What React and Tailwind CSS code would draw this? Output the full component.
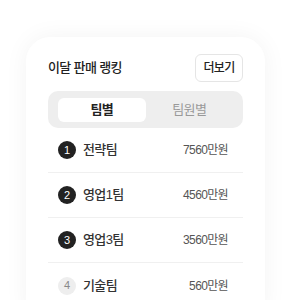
import React from 'react';

const rows = [
    { rank: 1, name: '전략팀', amount: '7560만원' },
    { rank: 2, name: '영업1팀', amount: '4560만원' },
    { rank: 3, name: '영업3팀', amount: '3560만원' },
    { rank: 4, name: '기술팀', amount: '560만원' },
];

const App = () => {
    return (
        <div className="w-[300px] h-[300px] overflow-hidden bg-white font-['Liberation_Sans','Noto_Sans_CJK_KR',sans-serif] tracking-[-0.04em]">
            <div className="ml-[26px] mt-[37px] w-[239px] rounded-[24px] bg-white shadow-[0_0_24px_rgba(0,0,0,0.05)] px-[22px] pt-[17px] pb-4">
                {/* Header */}
                <div className="flex items-center justify-between">
                    <h2 className="text-[13px] font-medium text-[#222]">이달 판매 랭킹</h2>
                    <button className="h-[28px] w-[48px] rounded-md border border-[#e5e5e5] bg-white text-[12px] font-medium text-[#222]">
                        더보기
                    </button>
                </div>

                {/* Tabs */}
                <div className="mt-[9px] flex h-[37px] items-center rounded-[10px] bg-[#eeeeee] px-[10px]">
                    <div className="flex h-[24px] flex-1 items-center justify-center rounded-md bg-white text-[13px] font-bold text-[#222]">
                        팀별
                    </div>
                    <div className="flex h-[24px] flex-1 items-center justify-center text-[13px] text-[#999]">
                        팀원별
                    </div>
                </div>

                {/* Ranking list */}
                <ul>
                    {rows.map((row, idx) => (
                        <li
                            key={row.rank}
                            className={`flex h-[45px] items-center pl-[10px] pr-[15px] ${idx < rows.length - 1 ? 'border-b border-[#f0f0f0]' : ''}`}
                        >
                            <span
                                className={`flex h-[18px] w-[18px] items-center justify-center rounded-full text-[11px] tracking-normal ${row.rank <= 3 ? 'bg-[#222] text-white' : 'bg-[#eeeeee] text-[#888]'}`}
                            >
                                {row.rank}
                            </span>
                            <span className="ml-[7px] text-[13px] font-medium text-[#333]">{row.name}</span>
                            <span className="ml-auto text-[12px] text-[#555]">{row.amount}</span>
                        </li>
                    ))}
                </ul>
            </div>
        </div>
    );
};

export default App;
